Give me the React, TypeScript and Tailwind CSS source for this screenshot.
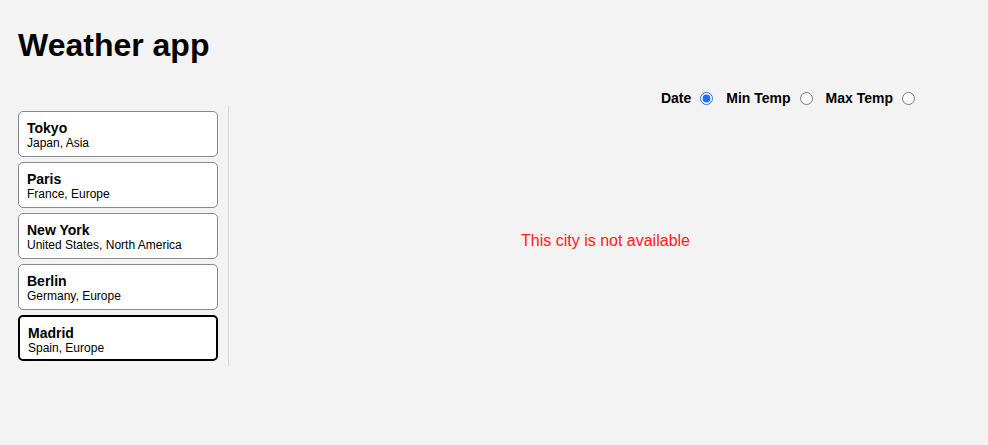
import { useState } from 'react';

type City = { name: string; region: string };

const cities: City[] = [
  { name: 'Tokyo', region: 'Japan, Asia' },
  { name: 'Paris', region: 'France, Europe' },
  { name: 'New York', region: 'United States, North America' },
  { name: 'Berlin', region: 'Germany, Europe' },
  { name: 'Madrid', region: 'Spain, Europe' },
];

const sorts = ['Date', 'Min Temp', 'Max Temp'];

export default function App() {
  const [selected, setSelected] = useState('Madrid');
  const [sortBy, setSortBy] = useState('Date');

  return (
    <div className="min-h-[445px] bg-[#f3f3f3] text-black font-['Liberation_Sans',Arial,sans-serif]">
      <h1 className="pl-[18px] pt-[26px] text-[32px] leading-[38px] font-bold">Weather app</h1>

      <div className="mt-[26px] h-[16px] flex items-center justify-end pr-[73px]">
        {sorts.map((s, i) => (
          <label key={s} className={`flex items-center text-[14px] font-bold ${i > 0 ? 'ml-[13px]' : ''}`}>
            <span>{s}</span>
            <input
              type="radio"
              name="sort"
              checked={sortBy === s}
              onChange={() => setSortBy(s)}
              className="m-0 ml-[9px] w-[13px] h-[13px] accent-[#1a73e8]"
            />
          </label>
        ))}
      </div>

      <div className="flex">
        <div className="w-[229px] pl-[18px] pr-[10px] py-[5px] border-r border-[#d4d4d4] flex flex-col gap-[5px]">
          {cities.map((c) => {
            const active = c.name === selected;
            return (
              <button
                key={c.name}
                onClick={() => setSelected(c.name)}
                className={`h-[46px] w-[200px] bg-white rounded-[5px] px-2 pt-[8px] text-left flex flex-col ${
                  active ? 'border-2 border-black' : 'border border-[#8a8a8a]'
                }`}
              >
                <span className="text-[14px] leading-[16px] font-bold">{c.name}</span>
                <span className="text-[12px] leading-[14px]">{c.region}</span>
              </button>
            );
          })}
        </div>

        <div className="flex-1 pr-[6px] pt-[126px] text-center">
          <p className="text-[16px] leading-[18px] text-[#ff2020]">This city is not available</p>
        </div>
      </div>
    </div>
  );
}
